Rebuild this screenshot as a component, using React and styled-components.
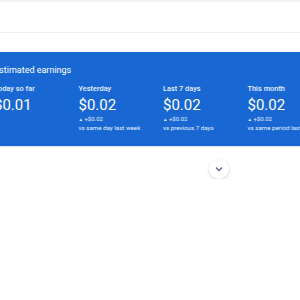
import styled, { createGlobalStyle } from "styled-components";

const Global = createGlobalStyle`
  html, body {
    margin: 0;
    padding: 0;
    background: #fff;
    overflow: hidden;
    font-family: Roboto, "Liberation Sans", sans-serif;
  }
`;

const stats = [
  { label: "Today so far", value: "$0.01" },
  { label: "Yesterday", value: "$0.02", delta: "+$0.02", note: "vs same day last week" },
  { label: "Last 7 days", value: "$0.02", delta: "+$0.02", note: "vs previous 7 days" },
  { label: "This month", value: "$0.02", delta: "+$0.02", note: "vs same period last year" },
];

export default function App() {
  return (
    <>
      <Global />
      <TopStrip />
      <Header />
      <Page>
        <Card>
          <Title>Estimated earnings</Title>
          <Row>
            {stats.map((s, i) => (
              <Stat key={i}>
                <Label>{s.label}</Label>
                <Value>{s.value}</Value>
                {s.delta && (
                  <>
                    <Delta>
                      <Arrow>▲</Arrow> {s.delta}
                    </Delta>
                    <Note>{s.note}</Note>
                  </>
                )}
              </Stat>
            ))}
          </Row>
        </Card>
        <ToggleRow>
          <Toggle aria-label="Expand">
            <svg width="8" height="6" viewBox="0 0 8 6">
              <path d="M1 1.5 L4 4.5 L7 1.5" fill="none" stroke="#5f6f8f" strokeWidth="1.4" />
            </svg>
          </Toggle>
        </ToggleRow>
      </Page>
    </>
  );
}

const TopStrip = styled.div`
  height: 2px;
  background: #f1f3f4;
`;

const Header = styled.div`
  height: 30px;
  background: #fff;
  border-bottom: 1px solid #eceff1;
`;

const Page = styled.div`
  margin-left: -22px;
  width: 482px;
  padding-top: 19px;
`;

const Card = styled.div`
  background: #1967d2;
  color: #fff;
  height: 94px;
  box-sizing: border-box;
  padding: 12px 0 0 16px;
  overflow: hidden;
  box-shadow: 0 1px 1px rgba(25, 103, 210, 0.15);
`;

const Title = styled.div`
  font-size: 9px;
  line-height: 12px;
  font-weight: 400;
`;

const Row = styled.div`
  display: flex;
  margin-top: 8px;
`;

const Stat = styled.div`
  width: 84.5px;
  flex: none;
  display: flex;
  flex-direction: column;
`;

const Label = styled.div`
  font-size: 7.4px;
  line-height: 10px;
  font-weight: 500;
  color: #e8f0fe;
`;

const Value = styled.div`
  font-size: 15px;
  line-height: 18px;
  margin-top: 2px;
`;

const Delta = styled.div`
  font-size: 6px;
  line-height: 8px;
  margin-top: 1px;
  color: #e8f0fe;
`;

const Arrow = styled.span`
  font-size: 4.5px;
`;

const Note = styled.div`
  font-size: 6.2px;
  line-height: 8px;
  color: #e8f0fe;
  white-space: nowrap;
`;

const ToggleRow = styled.div`
  display: flex;
  justify-content: center;
  padding-top: 13px;
`;

const Toggle = styled.button`
  width: 20px;
  height: 20px;
  border-radius: 50%;
  border: none;
  background: #fff;
  box-shadow: 0 1px 3px rgba(60, 64, 67, 0.25);
  display: flex;
  align-items: center;
  justify-content: center;
  padding: 0;
`;
